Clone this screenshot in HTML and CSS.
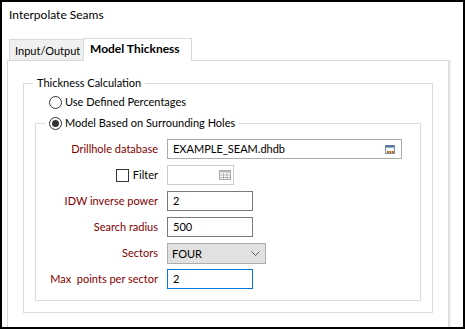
FILE: index.html
```html
<!DOCTYPE html>
<html lang="en">
<head>
    <meta charset="UTF-8">
    <title>Interpolate Seams</title>
    <link rel="stylesheet" href="styles.css">
</head>
<body>
    <div class="window">
        <div class="title">Interpolate Seams</div>

        <div class="tabs">
            <div class="tab">Input/Output</div>
            <div class="tab active">Model Thickness</div>
        </div>

        <div class="panel">
            <fieldset class="group">
                <legend>Thickness Calculation</legend>
                <label class="radio-row first">
                    <span class="radio"></span>
                    <span>Use Defined Percentages</span>
                </label>

                <fieldset class="group inner">
                    <legend>
                        <label class="radio-row">
                            <span class="radio checked"></span>
                            <span>Model Based on Surrounding Holes</span>
                        </label>
                    </legend>

                    <div class="form">
                        <div class="label">Drillhole database</div>
                        <div class="field file">
                            <span>EXAMPLE_SEAM.dhdb</span>
                            <svg class="browse-icon" width="10" height="9" viewBox="0 0 10 9">
                                <rect x="0.5" y="0.5" width="9" height="8" fill="#f4f8fc" stroke="#7d90a8"/>
                                <rect x="0.5" y="0.5" width="9" height="2" fill="#4f6f94"/>
                                <rect x="2" y="6" width="2" height="2" fill="#b86a1e"/>
                                <rect x="4.5" y="6" width="2" height="2" fill="#b86a1e"/>
                                <rect x="7" y="6" width="2" height="2" fill="#b86a1e"/>
                            </svg>
                        </div>

                        <div class="label plain">
                            <span class="check"></span>
                            <span>Filter</span>
                        </div>
                        <div class="field filter">
                            <svg class="filter-icon" width="12" height="10" viewBox="0 0 12 10">
                                <rect x="0.5" y="0.5" width="11" height="9" fill="#fff" stroke="#a8a8a8"/>
                                <rect x="0.5" y="0.5" width="11" height="2" fill="#b4b4b4"/>
                                <path d="M1 5h10M1 7.5h10M4.5 3v6M8 3v6" stroke="#b4b4b4" stroke-width="1"/>
                            </svg>
                        </div>

                        <div class="label">IDW inverse power</div>
                        <div class="field short">2</div>

                        <div class="label">Search radius</div>
                        <div class="field short">500</div>

                        <div class="label">Sectors</div>
                        <div class="field select">
                            <span>FOUR</span>
                            <svg width="9" height="5" viewBox="0 0 9 5">
                                <path d="M0.5 0.5l4 4 4-4" fill="none" stroke="#5a5a5a" stroke-width="1"/>
                            </svg>
                        </div>

                        <div class="label">Max&nbsp; points per sector</div>
                        <div class="field short focused">2</div>
                    </div>
                </fieldset>
            </fieldset>
        </div>
    </div>
</body>
</html>
```

FILE: styles.css
```css
body {
    margin: 0;
    font-family: Lato, "Noto Sans", sans-serif;
    font-size: 11px;
    color: #000;
    background: #fff;
    white-space: nowrap;
}

.window {
    width: 465px;
    height: 329px;
    box-sizing: border-box;
    border: 2px solid #000;
    background: #fff;
    overflow: hidden;
}

.title {
    padding: 5px 0 0 7px;
    font-size: 12px;
    line-height: 16px;
    height: 16px;
}

.tabs {
    display: flex;
    align-items: flex-end;
    height: 23px;
    margin: 15px 0 -1px 7px;
}

.tab {
    box-sizing: border-box;
    height: 21px;
    width: 75px;
    margin-bottom: 1px;
    padding: 3px 0 0 5px;
    line-height: 16px;
    border: 1px solid #d9d9d9;
    border-bottom: none;
    background: #f0f0f0;
}

.tab.active {
    position: relative;
    height: 23px;
    width: 109px;
    margin: 0 0 0 -1px;
    padding: 2px 0 0 6px;
    font-size: 12px;
    font-weight: bold;
    background: #fff;
}

.panel {
    height: 300px;
    margin: 0 14px 0 5px;
    padding: 14px 15px 0;
    border: 1px solid #d9d9d9;
    box-shadow: 2px 0 0 #ececec;
}

.group {
    margin: 0;
    padding: 0 0 11px;
    min-width: 0;
    border: 1px solid #dcdcdc;
}

.group legend {
    margin-left: 9px;
    padding: 0 4px;
    line-height: 16px;
}

.group.inner {
    margin: 5px 11px 0;
}

.radio-row {
    display: flex;
    align-items: center;
    gap: 3px;
    height: 16px;
    line-height: 16px;
}

.radio-row.first {
    margin: 3px 0 0 25px;
}

.radio {
    box-sizing: border-box;
    width: 13px;
    height: 13px;
    border: 1px solid #333;
    border-radius: 50%;
    background: #fff;
    display: flex;
    align-items: center;
    justify-content: center;
}

.radio.checked::after {
    content: "";
    width: 7px;
    height: 7px;
    border-radius: 50%;
    background: #333;
}

.form {
    display: grid;
    grid-template-columns: 122px auto;
    column-gap: 9px;
    row-gap: 6px;
    padding-top: 8px;
    justify-items: start;
}

.label {
    justify-self: end;
    line-height: 20px;
    color: #800000;
}

.label.plain {
    display: flex;
    align-items: center;
    gap: 4px;
    color: #000;
}

.check {
    box-sizing: border-box;
    width: 13px;
    height: 13px;
    border: 1px solid #333;
    background: #fff;
}

.field {
    box-sizing: border-box;
    height: 20px;
    padding: 0 5px;
    line-height: 18px;
    border: 1px solid #7a7a7a;
    background: #fff;
    display: flex;
    align-items: center;
    justify-content: space-between;
}

.field.file {
    width: 235px;
    border-color: #ababab;
}

.browse-icon {
    margin-right: 1px;
}

.field.filter {
    width: 67px;
    border-color: #cccccc;
    justify-content: flex-end;
    padding-right: 2px;
}

.field.short {
    width: 86px;
}

.field.focused {
    border-color: #0078d7;
}

.field.select {
    width: 99px;
    height: 21px;
    margin-bottom: -1px;
    background: #e1e1e1;
    border-color: #adadad;
    padding: 0 5px 0 4px;
}
```
